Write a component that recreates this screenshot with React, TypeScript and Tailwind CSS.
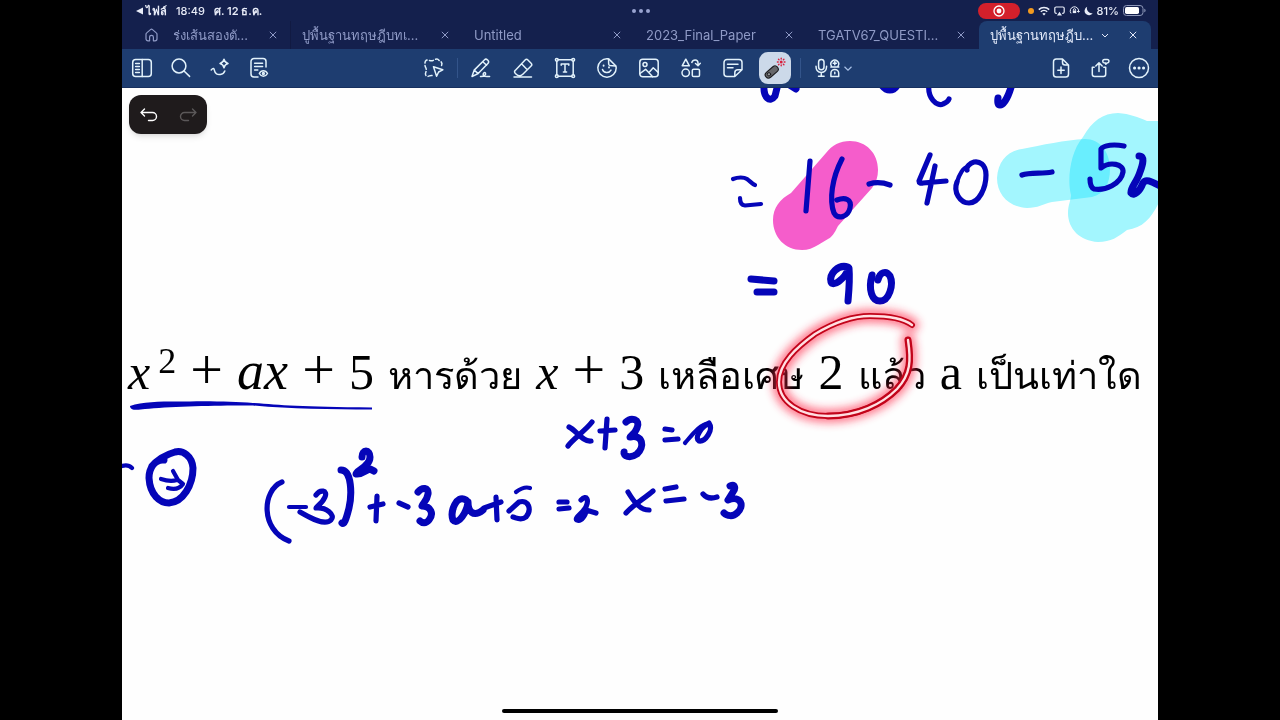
import type { ReactNode } from "react";

function Icon({ children, size = 22, className = "" }: { children: ReactNode; size?: number; className?: string }) {
  return (
    <svg
      width={size}
      height={size}
      viewBox="0 0 22 22"
      fill="none"
      stroke="currentColor"
      strokeWidth="1.500"
      strokeLinecap="round"
      strokeLinejoin="round"
      className={className}
      aria-hidden="true"
    >
      {children}
    </svg>
  );
}

const leftTools: { label: string; icon: ReactNode }[] = [
  {
    label: "Sidebar",
    icon: (
      <>
        <rect x="1.7" y="2.5" width="18.6" height="17" rx="3" />
        <path d="M11.2 2.5v17M4.6 6.4h3.8M4.6 9.4h3.8M4.6 12.4h3.8M4.6 15.4h3.8" />
      </>
    ),
  },
  {
    label: "Search",
    icon: (
      <>
        <circle cx="9" cy="9" r="6.9" />
        <path d="M14 14l5.6 5.4" />
      </>
    ),
  },
  {
    label: "Smart ink",
    icon: (
      <>
        <path d="M2.200 13c2-2.300 2.900-1.800 3.300.7.500 3 3 4.300 5.800 3.800 2.200-.4 3.800-1.600 4.500-3.600" />
        <path d="M15 2.200c.6 2.900 1.400 3.700 4 4.300-2.600.7-3.400 1.500-4 4.300-.6-2.800-1.400-3.600-4-4.300 2.600-.6 3.400-1.400 4-4.300z" />
      </>
    ),
  },
  {
    label: "Page preview",
    icon: (
      <>
        <path d="M18 10V4.500a3 3 0 0 0-3-3H6a3 3 0 0 0-3 3V17a3 3 0 0 0 3 3h4" />
        <path d="M6.600 6.300h8M6.600 9.600h8M6.600 13h3.200" />
        <path d="M11.300 16.500c1-1.800 2.400-2.700 4.100-2.700s3.100.9 4.100 2.700c-1 1.800-2.400 2.700-4.100 2.700s-3.100-.9-4.100-2.700z" />
        <circle cx="15.400" cy="16.500" r=".9" />
      </>
    ),
  },
];

const penTools: { label: string; icon: ReactNode }[] = [
  {
    label: "Pen",
    icon: (
      <>
        <path d="M2 19.500l2.200-6.400L14.600 2.700c1.700-1.700 5.200 1.400 3.500 3.500L8.200 16.600 2 19.500zM4.200 13.100l4 3.500M12.800 4.700l3.800 3.500" />
        <path d="M10.500 19.500c3.500.2 5.800-1.800 5-3.400-.9-1.400-3.200.4-2 2.200.9 1.300 3.600 1.200 6.100 1.200" />
      </>
    ),
  },
  {
    label: "Eraser",
    icon: (
      <>
        <path d="M4.200 17.200l-1-1c-.9-.9-.9-1.900 0-2.800L13.100 3c.9-.9 1.900-.9 2.800 0l3.200 3.200c.9.9.9 1.900 0 2.800l-8.300 8.200c-2 2-4.800 1.800-6.600 0zM9.500 6.800l5.800 5.900M2 19.900h17.500" />
      </>
    ),
  },
  {
    label: "Text",
    icon: (
      <>
        <path d="M4.200 2.800h13.600M4.200 19.200h13.600M2.800 4.200v13.600M19.200 4.200v13.600" />
        <circle cx="2.800" cy="2.800" r="1.400" />
        <circle cx="19.200" cy="2.800" r="1.400" />
        <circle cx="2.800" cy="19.200" r="1.400" />
        <circle cx="19.200" cy="19.200" r="1.400" />
        <path d="M7.200 8.200V6.900h7.600v1.300M11 6.900v8.200M9.400 15.100h3.200" />
      </>
    ),
  },
  {
    label: "Stickers",
    icon: (
      <>
        <path d="M11.500 1.800A9.200 9.200 0 1 0 20.200 11c0-.8-.2-1.500-.5-2.200L12.700 1.900z" />
        <path d="M12.300 2c1 2.500-.4 4.500.8 5.900 1.200 1.300 4 .4 6.500 1.100" />
        <path d="M6.500 12.500c1.200 3.800 6.600 4 8.500.6" />
        <path d="M7.600 8.400v.4M13 10.300v.2" strokeWidth="1.900" />
      </>
    ),
  },
  {
    label: "Image",
    icon: (
      <>
        <rect x="1.800" y="2.200" width="18.400" height="17.600" rx="3" />
        <circle cx="7" cy="7.600" r="2" />
        <path d="M2 16.500l5.600-4.200 5 5.200M11 15.500l4.200-4.700 5 4.600M12.600 17.500l2 2.200" />
      </>
    ),
  },
  {
    label: "Shapes",
    icon: (
      <>
        <path d="M5.800 2.200L9.300 8.800H2.200z" />
        <circle cx="5.700" cy="15.800" r="3.700" />
        <rect x="12.300" y="12.200" width="7.200" height="7.300" rx="1.300" />
        <path d="M11.800 5.400c1.200-3.300 6-3.200 6.200.3v2.400M15.500 6.500l2.500 2.200 2.300-2.500" />
      </>
    ),
  },
  {
    label: "Sticky note",
    icon: (
      <>
        <path d="M12.800 19.500H5a3 3 0 0 1-3-3V5.500a3 3 0 0 1 3-3h12a3 3 0 0 1 3 3v7.200zM12.800 19.500v-3.800a3 3 0 0 1 3-3H20M5.500 7.200h10.500M5.500 10.800h5.500" />
      </>
    ),
  },
];

const rightTools: { label: string; icon: ReactNode }[] = [
  {
    label: "Add page",
    icon: (
      <>
        <path d="M12.500 2H6.300a2.800 2.800 0 0 0-2.800 2.800v12.400A2.800 2.800 0 0 0 6.300 20h9.400a2.800 2.800 0 0 0 2.800-2.800V8zM12.500 2v3.500A2.500 2.500 0 0 0 15 8h3.500M11 10v6.400M7.800 13.200h6.400" />
      </>
    ),
  },
  {
    label: "Share",
    icon: (
      <>
        <path d="M5.200 10.200H3.300v7a2.200 2.200 0 0 0 2.200 2.200h9a2.200 2.200 0 0 0 2.200-2.200v-7h-1.900M10 14.500V6M6.800 9L10 5.700 13.200 9" />
        <path d="M15.500 2.500h2.700a1.700 1.700 0 0 1 0 3.500l-1.400 1.300V6h-1.300a1.700 1.700 0 0 1 0-3.500z" />
      </>
    ),
  },
  {
    label: "More",
    icon: (
      <>
        <circle cx="11" cy="11" r="9.500" />
        <path d="M6.500 11h.1M11 11h.1M15.500 11h.1" strokeWidth="3" />
      </>
    ),
  },
];

const tabs = ["ปูพื้นฐานทฤษฎีบทเ...", "Untitled", "2023_Final_Paper", "TGATV67_QUESTI..."];

function CloseButton({ name }: { name: string }) {
  return (
    <button type="button" aria-label={`Close ${name}`} className="flex size-5 shrink-0 items-center justify-center">
      <svg width="8" height="8" viewBox="0 0 8 8" stroke="currentColor" strokeWidth="1" aria-hidden="true">
        <path d="M.8.8l6.400 6.400M7.200.8L.8 7.200" />
      </svg>
    </button>
  );
}

function StatusBar() {
  return (
    <div className="grid h-[21px] grid-cols-3 items-center pr-3 pl-[14px] text-[11px] leading-4 font-semibold text-[#e8ecf8]">
      <div className="flex items-center gap-[9px]">
        <a href="#files" className="flex items-center gap-[3px]">
          <svg width="7" height="8" viewBox="0 0 7 8" fill="currentColor" aria-hidden="true">
            <path d="M7 .5v7L0 4z" />
          </svg>
          ไฟล์
        </a>
        <span className="font-medium">18:49</span>
        <span>ศ. 12 ธ.ค.</span>
      </div>
      <div className="flex justify-center gap-[3px]">
        <span className="size-1 rounded-full bg-[#99a3d0]" />
        <span className="size-1 rounded-full bg-[#99a3d0]" />
        <span className="size-1 rounded-full bg-[#99a3d0]" />
      </div>
      <div className="flex items-center justify-end gap-1">
        <span className="mr-1 flex h-4 w-[42px] items-center justify-center rounded-full bg-[#d3202b]">
          <svg width="12" height="12" viewBox="0 0 12 12" fill="none" aria-hidden="true">
            <circle cx="6" cy="6" r="5" stroke="#fff" strokeWidth="1.300" />
            <circle cx="6" cy="6" r="2.400" fill="#fff" />
          </svg>
        </span>
        <span className="size-[6px] rounded-full bg-[#f39a1f]" />
        <svg width="12" height="10" viewBox="0 0 12 10" fill="none" stroke="currentColor" strokeWidth="1.500" aria-hidden="true">
          <path d="M.8 3.600a7.500 7.500 0 0 1 10.400 0M2.800 5.800a4.600 4.600 0 0 1 6.400 0" />
          <path d="M6 9.500L4.300 7.700a2.500 2.500 0 0 1 3.400 0z" fill="currentColor" stroke="none" />
        </svg>
        <svg width="11" height="10" viewBox="0 0 11 10" fill="none" stroke="currentColor" strokeWidth="1.200" aria-hidden="true">
          <path d="M2.800 7.300H2A1.300 1.300 0 0 1 .8 6V2.300A1.300 1.300 0 0 1 2.100 1h6.800a1.300 1.300 0 0 1 1.300 1.300V6A1.300 1.300 0 0 1 9 7.300h-.8" />
          <path d="M5.500 5.800L8 9.400H3z" fill="currentColor" stroke="none" />
        </svg>
        <svg width="11" height="10" viewBox="0 0 11 10" fill="none" stroke="currentColor" strokeWidth="1" aria-hidden="true">
          <path d="M2 7.400A4.200 4.200 0 1 1 9.500 6M8 5l1.500 1.300L10.700 5" />
          <rect x="3.800" y="4.500" width="3.400" height="2.600" fill="currentColor" stroke="none" />
          <path d="M4.400 4.500v-.7a1.100 1.100 0 0 1 2.200 0v.7" />
        </svg>
        <svg width="9" height="10" viewBox="0 0 9 10" fill="currentColor" aria-hidden="true">
          <path d="M3.200.8A4.400 4.400 0 1 0 8.800 7 4.700 4.700 0 0 1 3.200.8z" />
        </svg>
        <span className="font-medium">81%</span>
        <svg width="23" height="11" viewBox="0 0 23 11" fill="none" aria-hidden="true">
          <rect x=".5" y=".5" width="19.500" height="10" rx="3" stroke="#8d97b8" />
          <rect x="2" y="2" width="14" height="7" rx="1.700" fill="#fff" />
          <path d="M21.300 3.700v3.600c.9-.3 1.300-1 1.300-1.800s-.4-1.500-1.300-1.800z" fill="#8d97b8" />
        </svg>
      </div>
    </div>
  );
}

function TabBar() {
  return (
    <nav aria-label="Open documents" className="flex h-7 items-stretch pr-[7px] text-[13px] leading-7 text-[#8f9ac6]">
      <button type="button" aria-label="Home" className="flex w-[52px] shrink-0 items-center justify-end pr-4">
        <svg width="13" height="14" viewBox="0 0 13 14" fill="none" stroke="currentColor" strokeWidth="1.200" strokeLinejoin="round" aria-hidden="true">
          <path d="M4.600 12.800H3a2 2 0 0 1-2-2V6.300c0-.6.200-1 .7-1.400L5.500 1.600a1.500 1.500 0 0 1 2 0l3.800 3.300c.5.400.7.800.7 1.400v4.500a2 2 0 0 1-2 2H8.400V9.300a1.900 1.900 0 0 0-3.800 0z" />
        </svg>
      </button>
      <div className="flex w-[117px] shrink-0 items-center justify-between border-r border-[#111a42] pr-[7px]">
        <a href="#doc-0" className="flex w-[74px] justify-end overflow-hidden whitespace-nowrap">ร่งเส้นสองตั...</a>
        <CloseButton name="ร่งเส้นสองตั" />
      </div>
      {tabs.map((t) => (
        <div key={t} className="flex min-w-0 flex-1 items-center justify-between pr-2 pl-[11px]">
          <a href="#doc" className="truncate">{t}</a>
          <CloseButton name={t} />
        </div>
      ))}
      <div className="flex min-w-0 flex-1 items-center rounded-t-lg bg-[#1e3d70] pr-2 pl-[11px] text-[#e3eafa]">
        <a href="#doc-active" aria-current="page" className="grow truncate">ปูพื้นฐานทฤษฎีบ...</a>
        <svg width="8" height="5" viewBox="0 0 8 5" fill="none" stroke="currentColor" strokeWidth="1" className="mr-[14px] shrink-0" aria-hidden="true">
          <path d="M1 1l3 3 3-3" />
        </svg>
        <CloseButton name="ปูพื้นฐานทฤษฎีบท" />
      </div>
    </nav>
  );
}

function Toolbar() {
  return (
    <div role="toolbar" aria-label="Tools" className="flex h-[39px] items-center border-b border-[#17305f] bg-[#1e3d70] text-[#e2f2fb]">
      <div className="flex flex-1">
        {leftTools.map((t) => (
          <button key={t.label} type="button" aria-label={t.label} className="flex h-9 w-[39px] items-center justify-center">
            <Icon>{t.icon}</Icon>
          </button>
        ))}
      </div>
      <div className="flex items-center">
        <button type="button" aria-label="Lasso" className="flex h-9 w-[42px] items-center justify-center">
          <Icon>
            <path
              d="M9 18.500c-1.600-.6-2.800.9-4.200.9C2.300 19.200 2 17 2.800 15.300c.9-2 .6-3.300-.2-5-.9-1.800-1-4.600 0-6.400C4.300 2 6.500 3.800 8.500 3.800s3.500-1.800 5.500-1.700c1.600.1 2.200 1.800 3.500 2.400 2 1 1.700 3.200.6 5"
              strokeDasharray="4 2.400"
            />
            <path d="M10.500 9.800l9.300 3-4.200 2.200-2 4.300z" />
          </Icon>
        </button>
        <span className="ml-[2px] h-5 w-px bg-[#33548a]" />
        <span className="w-[2px]" />
        {penTools.map((t) => (
          <button key={t.label} type="button" aria-label={t.label} className="flex h-9 w-[42px] items-center justify-center">
            <Icon>{t.icon}</Icon>
          </button>
        ))}
        <button type="button" aria-label="Laser pointer" aria-pressed="true" className="flex h-9 w-[42px] items-center justify-center">
          <span className="flex size-8 items-center justify-center rounded-[9px] bg-[#ccd9e9]">
            <svg width="26" height="26" viewBox="0 0 26 26" fill="none" strokeLinecap="round" aria-hidden="true">
              <path d="M6.500 19.800l6.500-5.600" stroke="#1c1c1e" strokeWidth="7.600" />
              <path d="M6.500 19.800l6.500-5.600" stroke="#67686b" strokeWidth="5.400" />
              <circle cx="7" cy="19.300" r="1.700" fill="#929396" stroke="#1c1c1e" strokeWidth="1" />
              <circle cx="19.200" cy="7" r="1.500" fill="#d81f3c" />
              <path d="M19.200 3.200v.8M19.200 10v.8M15.400 7h.8M22.200 7h.8M16.500 4.300l.5.500M21.400 9.200l.5.500M21.900 4.300l-.5.500M17 9.200l-.5.500" stroke="#d81f3c" strokeWidth="1.400" />
            </svg>
          </span>
        </button>
        <span className="ml-1 h-5 w-px bg-[#33548a]" />
        <button type="button" aria-label="Record audio" className="flex h-9 w-[66px] items-center gap-1 pl-[14px]">
          <svg width="25" height="20" viewBox="0 0 25 20" fill="none" stroke="currentColor" strokeWidth="1.500" strokeLinecap="round" strokeLinejoin="round" aria-hidden="true">
            <rect x="3.600" y="1.400" width="5.400" height="10.400" rx="2.700" />
            <path d="M1 8.300c0 4 2 6.200 5.300 6.200s5.300-2.200 5.300-6.200M6.300 14.500v3.700M3.500 18.200h5.600" />
            <path d="M16.500 8.200A3.900 3.900 0 1 1 23 8.200M15.800 9h8M19.800 3.600v3.200M18.200 5.200h3.200" />
            <path d="M15.900 18.500v-3.200a3.900 3.900 0 0 1 7.800 0v3.200zM19.800 14.200v1.600" />
          </svg>
          <svg width="8" height="5" viewBox="0 0 8 5" fill="none" stroke="#a9c1e6" strokeWidth="1.200" aria-hidden="true">
            <path d="M.5.8L4 4.200 7.500.8" />
          </svg>
        </button>
      </div>
      <div className="flex flex-1 justify-end">
        {rightTools.map((t) => (
          <button key={t.label} type="button" aria-label={t.label} className="flex h-9 w-[39px] items-center justify-center">
            <Icon>{t.icon}</Icon>
          </button>
        ))}
      </div>
    </div>
  );
}

const inkThin = [
  "M733 179C738 177 744 177 747 179S752 184 755 185",
  "M740 198Q740 205 745 205.500L761 204",
  "M161 479Q170 482 177 480M173 471L178 480 183 484Q178 491 168 488",
  "M122 466Q128 464 132 468",
  "M289 507H306",
  "M967 168C964 166 959 175 957 182",
  "M592 422C586 430 572 440 568 446",
  "M685 443C692 435 700 424 709 423",
  "M516 492Q524 486 530 488",
];

const inkMedium = [
  "M869 184Q879 181 890 185",
  "M1022 175C1030 172 1042 174 1052 172",
  "M810 161L806 211",
  "M842 159C832 178 829 200 834 213C838 220 848 217 850 208C852 199 845 197 837 200",
  "M930 155L919 181Q919 184 923 183L946 181M935 166L927 203",
  "M957 182C953 192 960 203 969 203C979 203 986 188 986 175C986 164 979 161 974 162C970 163 966 167 967 170",
  "M1124 146C1114 144 1104 145 1101 149L1101 168C1110 161 1124 164 1123 172C1121 184 1105 191 1094 189Q1090 187 1090 179",
  "M929 84C927 98 937 107 943 104C948 102 949 99 949 99",
  "M592 422C586 430 572 440 568 446M569 427C576 430 582 442 591 441",
  "M607 419L605 448M600 431L615 430",
  "M665 429L672 430M665 440L678 439",
  "M709 423C714 430 705 442 699 441C694 438 702 426 708 424",
  "M282 482C262 490 260 530 289 541",
  "M316 495C320 489 328 490 325 497C322 504 316 507 316 508C326 507 336 515 331 520C325 526 312 519 300 512",
  "M370 507L383 504M377 496L376 521",
  "M399 503L408 507",
  "M484 508L501 502M496 497L497 520",
  "M509 511L519 502C529 499 532 510 526 517C521 521 517 518 513 517",
  "M559 502H567M559 509L569 508",
  "M581 500C587 494 589 500 586 507C583 513 574 518 577 520C581 522 586 515 586 510L596 513",
  "M653 491C645 498 633 505 626 513M628 492C634 502 640 510 649 510",
  "M665 489L676 487M666 501L684 499",
  "M703 494Q708 500 717 497",
];

const inkBold = [
  "M764 84C763 98 770 103 775 96L778 84M788 84L796 89",
  "M881 84C886 92 894 92 898 84",
  "M1012 84C1009 95 1004 105 1000 105Q997 105 998 98",
  "M1139 156C1145 156 1143 164 1140 172C1137 182 1130 188 1131 193C1134 197 1140 191 1143 183C1146 178 1152 182 1162 187",
  "M626 422C631 417 641 419 637 428C635 434 630 436 630 437C643 434 645 447 637 454C630 459 623 456 624 452",
  "M341 470C352 470 352 495 349 508C346 520 344 525 342 523",
  "M362 457C362 449 370 449 370 457C370 467 356 470 356 474C362 475 365 470 370 469L374 471",
  "M418 492C422 487 429 487 428 494C427 501 423 503 422 506C431 506 434 514 429 520C426 524 422 523 420 521",
  "M466 500C456 494 450 512 453 520C458 526 467 512 468 502C468 511 473 518 483 510",
  "M730 486C735 484 736 488 733 492L728 500C741 495 745 506 737 513C733 517 727 516 724 513",
  "M751 279L774 281M757 292L774 292",
  "M848 267C838 264 829 274 831 282C833 287 844 280 849 268C850 280 849 290 848 301",
  "M872 275C868 290 872 301 880 301C889 301 894 285 890 276C886 270 880 272 878 280",
  "M164 460C155 459 149 468 149 478C150 495 160 503 169 503C183 502 193 485 193 468C192 456 183 450 175 452C168 454 160 457 152 466",
];

const laser =
  "M912 325C903 318 886 316 870 316C850 316 830 325 815 334C797 347 779 363 779 382C779 402 800 416 828 416C858 416 882 404 897 389C911 374 911 360 908 340";

const laserWide = "M828 416C858 416 882 404 897 389C911 374 911 360 908 340";

function Highlights() {
  return (
    <svg viewBox="122 88 1036 632" preserveAspectRatio="xMinYMin meet" className="absolute inset-0 h-full w-full" aria-hidden="true">
      <path
        d="M850 141C866 141 878 153 878 170C878 177 876 183 872 188L838 226C834 234 832 237 828 239L818 245C813 248 808 250 802 250C785 250 773 237 773 220C773 208 780 199 791 193L826 153C832 145 840 141 850 141Z"
        fill="#f55dcb"
      />
      <g fill="#a4f7ff">
        <path className="mix-blend-multiply" d="M1085 139C1100 139 1110 152 1110 169C1110 184 1104 194 1092 197L1052 202C1043 204 1038 208 1027 208C1009 207 997 195 997 178C998 161 1008 151 1022 149C1042 145 1065 140 1085 139Z" />
        <path className="mix-blend-multiply" d="M1118 113C1130 114 1138 117 1147 121H1160V200C1153 216 1144 228 1127 230C1118 237 1111 242 1098 242C1080 241 1068 229 1068 213C1068 205 1071 200 1071 195C1067 180 1070 152 1083 137C1092 121 1103 113 1118 113Z" />
      </g>
    </svg>
  );
}

function Ink() {
  return (
    <svg
      viewBox="122 88 1036 632"
      preserveAspectRatio="xMinYMin meet"
      className="pointer-events-none absolute inset-0 h-full w-full"
      fill="none"
      strokeLinecap="round"
      strokeLinejoin="round"
      role="img"
      aria-label="Handwritten working"
    >
      <defs>
        <filter id="glow" x="-20%" y="-20%" width="140%" height="140%">
          <feGaussianBlur stdDeviation="4" />
        </filter>
      </defs>
      <g stroke="#0505b8">
        <g strokeWidth="4.200">{inkThin.map((d) => <path key={d} d={d} />)}</g>
        <g strokeWidth="5.200">{inkMedium.map((d) => <path key={d} d={d} />)}</g>
        <g strokeWidth="7">{inkBold.map((d) => <path key={d} d={d} />)}</g>
      </g>
      <path d="M130 406C145 401 165 401.500 190 401.500C215 401 235 402 253 403C280 405 300 407 372 407.500V409.500C330 409.500 290 409 253 405.500C220 405 170 406.500 145 409C138 410 130 411 130 406Z" fill="#0505b8" />
      <path d={laser} stroke="#ff2746" strokeWidth="14" opacity=".6" filter="url(#glow)" />
      <path d={laser} stroke="#c2041a" strokeWidth="6" />
      <path d={laserWide} stroke="#c2041a" strokeWidth="7" />
      <path d={laser} stroke="#ffdfe2" strokeWidth="2.400" />
    </svg>
  );
}

function Plus() {
  return <span className="text-[58px] leading-none">+</span>;
}

function Question() {
  return (
    <p className="relative flex items-baseline justify-between pr-4 pl-[6px] font-['Liberation_Serif',serif] text-[50px] leading-[64px] whitespace-nowrap text-black">
      <span>
        <i>x</i>
        <sup className="relative -top-4 ml-2 align-baseline text-[36px] leading-none">2</sup>
      </span>
      <Plus />
      <i className="text-[54px] leading-none">ax</i>
      <Plus />
      <span>5</span>
      <span className="text-[38px]">หารด้วย</span>
      <i>x</i>
      <Plus />
      <span>3</span>
      <span className="text-[38px]">เหลือเศษ</span>
      <span>2</span>
      <span className="text-[38px]">แล้ว</span>
      <span>a</span>
      <span className="text-[38px]">เป็นเท่าใด</span>
    </p>
  );
}

export default function App() {
  return (
    <div className="flex min-h-screen flex-col bg-black px-[122px] font-['Inter','Noto_Sans',sans-serif]">
      <header className="bg-[#14204d]">
        <StatusBar />
        <TabBar />
        <Toolbar />
      </header>
      <main className="relative grow overflow-hidden bg-[#fefefe] pt-[252px]">
        <Highlights />
        <Question />
        <Ink />
        <div className="absolute top-[7px] left-[7px] flex h-[39px] w-[78px] items-center justify-around rounded-xl bg-[#1f1b1c] text-white shadow-md">
          <button type="button" aria-label="Undo">
            <svg width="18" height="14" viewBox="0 0 18 14" fill="none" stroke="currentColor" strokeWidth="1.400" strokeLinecap="round" strokeLinejoin="round" aria-hidden="true">
              <path d="M4.500 1L1 4.500 4.500 8M1 4.500h11.500a4 4 0 0 1 0 8H8.500" />
            </svg>
          </button>
          <button type="button" aria-label="Redo" disabled className="text-[#5b5859]">
            <svg width="18" height="14" viewBox="0 0 18 14" fill="none" stroke="currentColor" strokeWidth="1.400" strokeLinecap="round" strokeLinejoin="round" aria-hidden="true">
              <path d="M13.500 1L17 4.500 13.500 8M17 4.500H5.500a4 4 0 0 0 0 8h4" />
            </svg>
          </button>
        </div>
        <div className="absolute inset-x-0 bottom-[7px] mx-auto h-1 w-[276px] rounded-full bg-black" />
      </main>
    </div>
  );
}
